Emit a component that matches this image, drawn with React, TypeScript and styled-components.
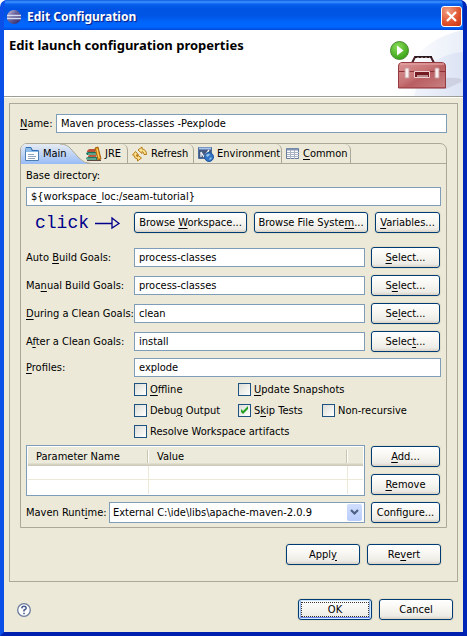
import React, { useState } from 'react';
import styled, { createGlobalStyle, css } from 'styled-components';

const face = '#ece9d8';
const line = '#aca899';
const fieldBorder = '#7f9db9';

const GlobalStyle = createGlobalStyle`
  *, *::before, *::after { box-sizing: border-box; }
  body {
    margin: 0;
    background: #fff;
    color: #000;
    font: 11px/14px "DejaVu Sans Condensed", "Noto Sans", sans-serif;
  }
  button, input, select { font: inherit; color: inherit; margin: 0; }
  u { text-decoration-thickness: 1px; text-underline-offset: 2px; }
`;

const Window = styled.main`
  min-height: 100vh;
  display: flex;
  flex-direction: column;
  border: solid;
  border-width: 0 4px 4px;
  border-color: #0046e0 #0026b8 #0020b0 #0a50e8;
  border-radius: 7px 7px 0 0;
  background: #0046e0;
  overflow: hidden;
`;

const TitleBar = styled.header`
  height: 30px;
  flex: none;
  display: flex;
  align-items: center;
  gap: 5px;
  padding: 3px 2px 0 3px;
  margin: 0 -1px;
  background: linear-gradient(#0a5ae0 0, #3f93ff 2px, #0a62ee 4px, #0054e3 8px, #0055e5 16px, #0065fb 22px, #0066ff 27px, #0048d8 30px);
`;

const WindowTitle = styled.h1`
  flex: 1;
  margin: 0;
  color: #fff;
  font: bold 12px/18px "Noto Sans", "DejaVu Sans Condensed", sans-serif;
  text-shadow: 1px 1px 1px #0a1883;
`;

const CloseButton = styled.button`
  width: 21px;
  height: 21px;
  padding: 0;
  display: grid;
  place-items: center;
  border: 1px solid #fff;
  border-radius: 3px;
  background: radial-gradient(circle at 30% 20%, #f0a084, #e0512c 60%, #c63310);
`;

const Banner = styled.section`
  height: 68px;
  flex: none;
  display: flex;
  justify-content: space-between;
  padding-left: 5px;
  background: #fff;
  border-bottom: 1px solid #fff;
  box-shadow: inset 0 -1px #9d9d93;
`;

const BannerTitle = styled.h2`
  margin: 7px 0 0;
  font: bold 13px/16px "Noto Sans", "DejaVu Sans Condensed", sans-serif;
`;

const Body = styled.div`
  flex: 1;
  padding: 5px 5px 0;
  background: ${face};
`;

const Group = styled.section`
  padding: 10px 10px 15px;
  border: 1px solid ${line};
`;

const NameRow = styled.div`
  display: grid;
  grid-template-columns: 36px 1fr;
  align-items: center;
  margin-bottom: 10px;
`;

const Label = styled.label`
  white-space: nowrap;
`;

const TextField = styled.input`
  width: 100%;
  min-width: 0;
  height: 19px;
  padding: 0 4px;
  border: 1px solid ${fieldBorder};
  border-radius: 0;
  background: #fff;
  outline: none;
`;

const Button = styled.button<{ $wide?: boolean; $primary?: boolean }>`
  width: ${p => (p.$wide ? '74px' : 'auto')};
  height: 21px;
  margin: 1px;
  padding: 0;
  white-space: nowrap;
  border: 1px solid #003c74;
  border-radius: 3px;
  background: linear-gradient(#fff, #f6f5f0 50%, #ecebe5 85%, #d8d0c4);
  box-shadow: 0 0 0 1px #e1decb;
  ${p => p.$primary && css`
    box-shadow: 0 0 0 1px #e1decb, inset 0 0 0 1px #cee7ff, inset 0 -2px #6982ee, inset 2px 0 #9db9ec, inset -2px 0 #9db9ec;
    outline: 1px dotted #333;
    outline-offset: -4px;
  `}
`;

const Folder = styled.div`
  border: 1px solid ${line};
  border-radius: 7px 7px 0 0;
`;

const TabList = styled.div`
  height: 20px;
  display: flex;
  border-bottom: 1px solid ${line};
`;

const tabBase = css`
  height: 19px;
  padding: 0;
  display: flex;
  align-items: center;
  gap: 3px;
  border: 0;
  background: none;
  white-space: nowrap;
`;

const ActiveTab = styled.button`
  ${tabBase}
  position: relative;
  width: 64px;
  padding-left: 3px;
`;

const TabShape = styled.svg`
  position: absolute;
  left: 0;
  top: 0;
  z-index: 0;
`;

const TabFace = styled.span`
  position: relative;
  display: flex;
  align-items: center;
  gap: 3px;
`;

const Tab = styled.button<{ $width: number }>`
  ${tabBase}
  width: ${p => p.$width}px;
  padding-left: 4px;
  border-right: 1px solid ${line};
  border-top-right-radius: 6px;
  &:nth-child(2) { padding-left: 1px; }
`;

const Panel = styled.div`
  padding: 5px 5px 3px;
`;

const BaseField = styled.div`
  display: grid;
  gap: 4px;
`;

const BrowseRow = styled.div`
  display: grid;
  grid-template-columns: 1fr 115px 116px 67px;
  gap: 5px;
  margin: 5px 0 12px;
`;

const Hint = styled.span`
  display: flex;
  align-items: center;
  gap: 6px;
  padding-left: 9px;
  color: #00008b;
  font: 18px/20px "Liberation Mono", monospace;
`;

const FormGrid = styled.div`
  display: grid;
  grid-template-columns: 103px 1fr 71px;
  gap: 5px;
  align-items: center;
`;

const WideCell = styled.div`
  grid-column: 2 / -1;
  display: grid;
`;

const Checks = styled.div`
  display: grid;
  grid-template-columns: 104px 84px auto;
  gap: 8px 0;
  margin: 6px 0 7px 108px;
`;

const CheckLabel = styled.label<{ $span?: number }>`
  grid-column: span ${p => p.$span ?? 1};
  height: 13px;
  display: flex;
  align-items: center;
  gap: 3px;
  white-space: nowrap;
`;

const CheckBox = styled.input`
  appearance: none;
  width: 13px;
  height: 13px;
  flex: none;
  border: 1px solid #1d5281;
  background: linear-gradient(135deg, #dcdcd7, #fff);
  &:checked {
    background: url("data:image/svg+xml,%3Csvg xmlns='http://www.w3.org/2000/svg' viewBox='0 0 11 11'%3E%3Cpath d='M2 4v3l2 2 5-5V1L4 6z' fill='%2321a121'/%3E%3C/svg%3E"), linear-gradient(135deg, #dcdcd7, #fff);
  }
`;

const ParamArea = styled.div`
  display: grid;
  grid-template-columns: 1fr 71px;
  gap: 5px;
`;

const ButtonStack = styled.div`
  display: grid;
  gap: 5px;
`;

const TableFrame = styled.div`
  padding: 1px;
  border: 1px solid ${fieldBorder};
  background: #fff;
`;

const ParamTable = styled.table`
  width: 100%;
  table-layout: fixed;
  border-collapse: separate;
  border-spacing: 0;
`;

const HeadCell = styled.th<{ $width?: number }>`
  width: ${p => (p.$width ? `${p.$width}px` : 'auto')};
  height: 19px;
  padding: 0 0 0 8px;
  text-align: left;
  font-weight: normal;
  background:
    linear-gradient(90deg, #c7c5b2 50%, #fff 50%) right 3px / 2px 13px no-repeat,
    linear-gradient(#ebeadb 82%, #d6d2c2 92%, #cbc7b8);
  &:last-child { background: linear-gradient(#ebeadb 82%, #d6d2c2 92%, #cbc7b8); }
`;

const Cell = styled.td`
  height: 14px;
  padding: 0;
  border-right: 1px solid ${face};
  border-bottom: 1px solid ${face};
  &:last-child { border-right: 0; }
  tr:last-child > & { border-bottom: 0; }
`;

const RuntimeRow = styled.div`
  display: grid;
  grid-template-columns: 78px 1fr 71px;
  gap: 5px;
  align-items: center;
  margin-top: 5px;
`;

const Combo = styled.div`
  display: grid;
  grid-template-columns: 1fr 17px;
  height: 21px;
  align-items: center;
  border: 1px solid ${fieldBorder};
  background: #fff;
`;

const Select = styled.select`
  grid-area: 1 / 1 / 2 / 3;
  appearance: none;
  width: 100%;
  height: 19px;
  padding: 0 18px 0 3px;
  border: 0;
  background: none;
  outline: none;
`;

const ComboArrow = styled.span`
  grid-area: 1 / 2;
  width: 15px;
  height: 17px;
  display: grid;
  place-items: center;
  border-radius: 2px;
  background: linear-gradient(#d0ddfd, #b9cdfb);
  pointer-events: none;
`;

const Actions = styled.div`
  display: flex;
  justify-content: flex-end;
  gap: 5px;
  padding-right: 5px;
  margin-top: 15px;
`;

const Footer = styled.footer`
  display: flex;
  align-items: center;
  gap: 5px;
  padding: 16px 4px 11px 8px;
`;

const HelpButton = styled.button`
  margin-right: auto;
  padding: 0;
  border: 0;
  background: none;
  display: flex;
`;

const EclipseIcon = () => (
  <svg width="16" height="16" viewBox="0 0 16 16" aria-hidden="true">
    <defs>
      <linearGradient id="orb" x1="0" y1="0" x2="1" y2="1">
        <stop offset="0" stopColor="#d9c9e0" />
        <stop offset=".4" stopColor="#6d669e" />
        <stop offset="1" stopColor="#2c2263" />
      </linearGradient>
    </defs>
    <circle cx="8" cy="8" r="7" fill="url(#orb)" />
    <path d="M1 6.500h14M1 9.500h14" stroke="#d4dcf4" strokeWidth="1.400" />
  </svg>
);

const ToolboxArt = () => (
  <svg width="80" height="66" viewBox="383 30 80 66" aria-hidden="true">
    <defs>
      <linearGradient id="sky" x1="0" y1="0" x2="1" y2="0">
        <stop offset="0" stopColor="#fff" />
        <stop offset="1" stopColor="#e9eef8" />
      </linearGradient>
      <linearGradient id="sky2" x1="0" y1="0" x2="1" y2="0">
        <stop offset="0" stopColor="#f0f3fb" />
        <stop offset="1" stopColor="#dce3f4" />
      </linearGradient>
      <linearGradient id="box" x1="0" y1="0" x2="1" y2="1">
        <stop offset="0" stopColor="#db9494" />
        <stop offset=".45" stopColor="#c67274" />
        <stop offset=".55" stopColor="#b95f62" />
        <stop offset="1" stopColor="#c98082" />
      </linearGradient>
      <radialGradient id="go" cx=".4" cy=".3" r=".7">
        <stop offset="0" stopColor="#8bdc58" />
        <stop offset="1" stopColor="#38a316" />
      </radialGradient>
    </defs>
    <path d="M463 30Q408 42 400 96h63z" fill="url(#sky)" />
    <path d="M463 52Q424 55 414 96h49z" fill="url(#sky2)" />
    <path d="M396 88l50 1 15-7q3-5-15-4z" fill="#b9bccb" opacity=".5" />
    <path d="M412 63l3-6h16l3 6" fill="none" stroke="#4b2028" strokeWidth="2" />
    <path d="M415 57h17" stroke="#28191f" strokeWidth="2" />
    <path d="M417 57.500h13" stroke="#8a6a70" strokeDasharray="2 2" />
    <path d="M398.500 66q0-3 3-3.500h41q3 .5 3 3.500v22h-47z" fill="url(#box)" stroke="#963b40" />
    <path d="M400 64h44" stroke="#e9aaaa" />
    <path d="M399 71.500h46" stroke="#8e3338" />
    <path d="M399 87.500h46" stroke="#a6494d" />
    <path d="M414.500 71.500h15v6h-15z" fill="#731b21" stroke="#efd0d0" />
    <path d="M417 76h11" stroke="#fff" />
    <path d="M405 68h4v10h-4zM435 68h4v10h-4z" fill="#f8eeee" stroke="#c89a9c" />
    <circle cx="399.500" cy="50.500" r="9" fill="url(#go)" stroke="#4c8a31" />
    <path d="M397 45.500v10l6.500-5z" fill="#fff" />
  </svg>
);

const PageIcon = () => (
  <svg width="16" height="16" viewBox="0 0 16 16" aria-hidden="true">
    <path d="M1.500 2.500v12h13v-10h-6l-1-2z" fill="#fff" stroke="#4a7fb5" />
    <path d="M1 1h6l1 3h6v2H2z" fill="#8fbbe8" />
    <path d="M2 1.500h5l1 3h6" fill="none" stroke="#2f6fb0" />
    <path d="M4 8.500h6M4 10.500h8M4 12.500h7" stroke="#91a3bd" />
  </svg>
);

const BooksIcon = () => (
  <svg width="16" height="16" viewBox="0 0 16 16" aria-hidden="true">
    <path d="M1 5l2-2h6v3H1z" fill="#b8503a" />
    <path d="M0 7l2-1h8v3H1z" fill="#16735e" />
    <path d="M2 10l1-1h7v2H2z" fill="#c4583c" />
    <path d="M0 12l2-1h9v3H1z" fill="#1b7b69" />
    <path d="M1 13h9M2 8h8" stroke="#a6d2b3" />
    <path d="M9 2l3-1 3 12-3 1z" fill="#e59a20" stroke="#a2600b" />
    <path d="M11 3l2 9" stroke="#ffd269" />
    <path d="M1 14.500h14" stroke="#5c4841" />
  </svg>
);

const RefreshIcon = () => (
  <svg width="16" height="16" viewBox="0 0 16 16" aria-hidden="true">
    <path d="M6 4l4-3v2q4.500.5 4.500 5.500h-2.500Q12 6 10 5.500v2z" fill="#ffe490" stroke="#b47a18" strokeLinejoin="round" />
    <path d="M9.500 12L5.500 15v-2Q2 12.500 1.800 9H.5L3.500 5.500 6.500 9H4.300q0 1.500 1.200 1.800V9z" fill="#ffe08a" stroke="#b47a18" strokeLinejoin="round" />
  </svg>
);

const EnvironmentIcon = () => (
  <svg width="16" height="16" viewBox="0 0 16 16" aria-hidden="true">
    <path d="M.5 1.500h13v11H.5z" fill="#43597f" stroke="#4b6c9f" />
    <path d="M1 2.500h12" stroke="#a7c4ec" strokeWidth="2" />
    <path d="M3 11V6M3 6l3 5M6 11l5-7" stroke="#f1f3f6" strokeWidth="1.300" />
    <circle cx="11" cy="11" r="4.500" fill="#3173c4" stroke="#24569d" />
    <path d="M8 9q2-2 4-1l-1 2-2 1zM11 13l2-2 1 1-2 2z" fill="#8fc0e8" />
  </svg>
);

const TableIcon = () => (
  <svg width="14" height="12" viewBox="0 0 14 12" aria-hidden="true">
    <path d="M.5.5h12v10H.5z" fill="#fff" stroke="#667a9d" />
    <path d="M1 1.500h11" stroke="#8196b4" strokeWidth="2" />
    <path d="M1 4.500h12M1 6.500h12M1 8.500h12M4.500 2v9M8.500 2v9" stroke="#a8b2c3" />
  </svg>
);

const ArrowDrawing = () => (
  <svg width="26" height="14" viewBox="0 0 26 14" fill="none" stroke="#00008b" strokeWidth="1.300" aria-hidden="true">
    <path d="M0 7.500h17M17 2v10l7-4.500zM17 2l7 5.500" />
  </svg>
);

const HelpIcon = () => (
  <svg width="14" height="14" viewBox="0 0 14 14" aria-hidden="true">
    <circle cx="7" cy="7" r="6.300" fill="#fff" stroke="#6b7c9f" strokeWidth="1.300" />
    <path d="M4.800 5.300Q5 3.300 7 3.300t2.200 1.700Q9.200 6 7 7.300v1.200M7 9.800v1.500" fill="none" stroke="#485a8c" strokeWidth="1.600" />
  </svg>
);

const goals = [
  { id: 'auto', label: <>Auto <u>B</u>uild Goals:</>, value: 'process-classes', pick: <><u>S</u>elect...</> },
  { id: 'manual', label: <>Ma<u>n</u>ual Build Goals:</>, value: 'process-classes', pick: <>S<u>e</u>lect...</> },
  { id: 'during', label: <><u>D</u>uring a Clean Goals:</>, value: 'clean', pick: <>Se<u>l</u>ect...</> },
  { id: 'after', label: <>A<u>f</u>ter a Clean Goals:</>, value: 'install', pick: <>Selec<u>t</u>...</> },
];

const tabs = [
  { id: 'jre', width: 43, icon: <BooksIcon />, label: 'JRE' },
  { id: 'refresh', width: 66, icon: <RefreshIcon />, label: 'Refresh' },
  { id: 'environment', width: 88, icon: <EnvironmentIcon />, label: 'Environment' },
  { id: 'common', width: 69, icon: <TableIcon />, label: <><u>C</u>ommon</> },
];

function Check({ id, span, on, children }: { id: string; span?: number; on?: boolean; children: React.ReactNode }) {
  return (
    <CheckLabel htmlFor={id} $span={span}>
      <CheckBox id={id} type="checkbox" defaultChecked={on} />
      <span>{children}</span>
    </CheckLabel>
  );
}

export default function App() {
  const [name, setName] = useState('Maven process-classes -Pexplode');

  return (
    <>
      <GlobalStyle />
      <Window>
        <TitleBar>
          <EclipseIcon />
          <WindowTitle>Edit Configuration</WindowTitle>
          <CloseButton type="button" aria-label="Close">
            <svg width="13" height="13" viewBox="0 0 13 13" aria-hidden="true">
              <path d="M2 2l9 9M11 2l-9 9" stroke="#fff" strokeWidth="2.200" />
            </svg>
          </CloseButton>
        </TitleBar>
        <Banner>
          <BannerTitle>Edit launch configuration properties</BannerTitle>
          <ToolboxArt />
        </Banner>
        <Body>
          <Group>
            <NameRow>
              <Label htmlFor="name"><u>N</u>ame:</Label>
              <TextField id="name" value={name} onChange={e => setName(e.target.value)} />
            </NameRow>
            <Folder>
              <TabList role="tablist">
                <ActiveTab type="button" role="tab" aria-selected="true">
                  <TabShape width="72" height="20" viewBox="0 0 72 20" aria-hidden="true">
                    <defs>
                      <linearGradient id="tab" x1="0" y1="0" x2="0" y2="1">
                        <stop offset="0" stopColor="#e6ebf1" />
                        <stop offset="1" stopColor="#99bcf7" />
                      </linearGradient>
                    </defs>
                    <path d="M0 20V5Q1 0 5 0h34q7 0 11 5l8 9q5 6 12 6z" fill="url(#tab)" />
                    <path d="M39 0q7 0 11 5l8 9q5 5.500 12 5.500" fill="none" stroke={line} />
                  </TabShape>
                  <TabFace><PageIcon />Main</TabFace>
                </ActiveTab>
                {tabs.map(t => (
                  <Tab key={t.id} type="button" role="tab" aria-selected="false" $width={t.width}>
                    {t.icon}
                    <span>{t.label}</span>
                  </Tab>
                ))}
              </TabList>
              <Panel role="tabpanel">
                <BaseField>
                  <Label htmlFor="base">Base directory:</Label>
                  <TextField id="base" defaultValue="${workspace_loc:/seam-tutorial}" />
                </BaseField>
                <BrowseRow>
                  <Hint>click<ArrowDrawing /></Hint>
                  <Button type="button">Browse <u>W</u>orkspace...</Button>
                  <Button type="button">Browse File Syste<u>m</u>...</Button>
                  <Button type="button"><u>V</u>ariables...</Button>
                </BrowseRow>
                <FormGrid>
                  {goals.map(g => (
                    <React.Fragment key={g.id}>
                      <Label htmlFor={g.id}>{g.label}</Label>
                      <TextField id={g.id} defaultValue={g.value} />
                      <Button type="button">{g.pick}</Button>
                    </React.Fragment>
                  ))}
                  <Label htmlFor="profiles"><u>P</u>rofiles:</Label>
                  <WideCell><TextField id="profiles" defaultValue="explode" /></WideCell>
                </FormGrid>
                <Checks>
                  <Check id="offline"><u>O</u>ffline</Check>
                  <Check id="update" span={2}><u>U</u>pdate Snapshots</Check>
                  <Check id="debug">Debu<u>g</u> Output</Check>
                  <Check id="skip" on>S<u>k</u>ip Tests</Check>
                  <Check id="nonrec">Non-recursive</Check>
                  <Check id="resolve" span={3}>Resolve Workspace artifacts</Check>
                </Checks>
                <ParamArea>
                  <TableFrame>
                    <ParamTable>
                      <thead>
                        <tr>
                          <HeadCell $width={121}>Parameter Name</HeadCell>
                          <HeadCell>Value</HeadCell>
                          <HeadCell $width={15} aria-label="Spare" />
                        </tr>
                      </thead>
                      <tbody>
                        <tr><Cell /><Cell /><Cell /></tr>
                        <tr><Cell /><Cell /><Cell /></tr>
                      </tbody>
                    </ParamTable>
                  </TableFrame>
                  <ButtonStack>
                    <Button type="button"><u>A</u>dd...</Button>
                    <Button type="button"><u>R</u>emove</Button>
                  </ButtonStack>
                </ParamArea>
                <RuntimeRow>
                  <Label htmlFor="runtime">Maven Runt<u>i</u>me:</Label>
                  <Combo>
                    <Select id="runtime">
                      <option>External C:\ide\libs\apache-maven-2.0.9</option>
                    </Select>
                    <ComboArrow>
                      <svg width="9" height="7" viewBox="0 0 9 7" aria-hidden="true">
                        <path d="M1 1l3.500 3.500L8 1" fill="none" stroke="#4d6185" strokeWidth="2.200" />
                      </svg>
                    </ComboArrow>
                  </Combo>
                  <Button type="button">Configure...</Button>
                </RuntimeRow>
              </Panel>
            </Folder>
            <Actions>
              <Button type="button" $wide>Appl<u>y</u></Button>
              <Button type="button" $wide>Re<u>v</u>ert</Button>
            </Actions>
          </Group>
          <Footer>
            <HelpButton type="button" aria-label="Help"><HelpIcon /></HelpButton>
            <Button type="submit" $wide $primary>OK</Button>
            <Button type="button" $wide>Cancel</Button>
          </Footer>
        </Body>
      </Window>
    </>
  );
}
